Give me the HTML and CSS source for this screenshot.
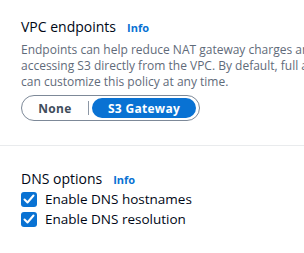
FILE: index.html
```html
<!DOCTYPE html>
<html>
<head>
<link rel="stylesheet" href="styles.css">
</head>
<body>
<div class="page">
  <section class="section top">
    <div class="heading"><span class="title">VPC endpoints</span><a class="info">Info</a></div>
    <p class="desc">Endpoints can help reduce NAT gateway charges and improve security by<br>accessing S3 directly from the VPC. By default, full access is allowed. You<br>can customize this policy at any time.</p>
    <div class="segmented">
      <button class="seg">None</button>
      <span class="sep"></span>
      <button class="seg active">S3 Gateway</button>
    </div>
  </section>
  <hr class="divider">
  <section class="section dns">
    <div class="heading"><span class="title">DNS options</span><a class="info">Info</a></div>
    <label class="check"><span class="box"><svg viewBox="0 0 16 16" width="16" height="16"><path d="M3.5 8.5 L6.5 11.5 L12.5 4.5" fill="none" stroke="#fff" stroke-width="2" stroke-linecap="round" stroke-linejoin="round"/></svg></span>Enable DNS hostnames</label>
    <label class="check"><span class="box"><svg viewBox="0 0 16 16" width="16" height="16"><path d="M3.5 8.5 L6.5 11.5 L12.5 4.5" fill="none" stroke="#fff" stroke-width="2" stroke-linecap="round" stroke-linejoin="round"/></svg></span>Enable DNS resolution</label>
  </section>
</div>
</body>
</html>
```
FILE: styles.css
```css
html, body {
  margin: 0;
  padding: 0;
  background: #fff;
}
body {
  font-family: "Open Sans", "Noto Sans", sans-serif;
  color: #000716;
  width: 304px;
  height: 253px;
  overflow: hidden;
}
.page {
  width: 304px;
  overflow: hidden;
}
.section {
  padding: 0 0 0 21px;
}
.top {
  padding-top: 17px;
}
.heading {
  display: flex;
  align-items: baseline;
  gap: 11px;
  height: 20px;
}
.title {
  font-size: 14px;
  line-height: 20px;
}
.info {
  font-size: 11px;
  font-weight: 700;
  color: #0972d3;
}
.desc {
  margin: 5px 0 0 0;
  width: 500px;
  white-space: nowrap;
  font-size: 12px;
  line-height: 16px;
  color: #5f6b7a;
}
.segmented {
  margin-top: 5px;
  width: 179px;
  height: 26px;
  box-sizing: border-box;
  border: 1px solid #7d8998;
  border-radius: 13px;
  display: flex;
  align-items: center;
  padding: 0 2px 0 2px;
}
.seg {
  font-family: inherit;
  border: 0;
  background: transparent;
  font-size: 12px;
  font-weight: 700;
  color: #414d5c;
  padding: 0;
  height: 20px;
  border-radius: 10px;
  letter-spacing: 0.3px;
}
.seg:first-child {
  width: 62px;
}
.sep {
  width: 1px;
  height: 14px;
  background: #8c97a5;
  margin: 0 3px 0 2px;
}
.seg.active {
  background: #0972d3;
  color: #fff;
  width: 104px;
}
.divider {
  border: 0;
  border-top: 1px solid #e9ebed;
  margin: 24px 0 0 0;
}
.dns {
  padding-top: 23px;
}
.check {
  display: flex;
  align-items: center;
  gap: 8px;
  font-size: 13.5px;
  line-height: 20px;
  height: 20px;
}
.box {
  width: 16px;
  height: 15px;
  border-radius: 3px;
  background: #0972d3;
  display: flex;
  align-items: center;
  justify-content: center;
}
```
